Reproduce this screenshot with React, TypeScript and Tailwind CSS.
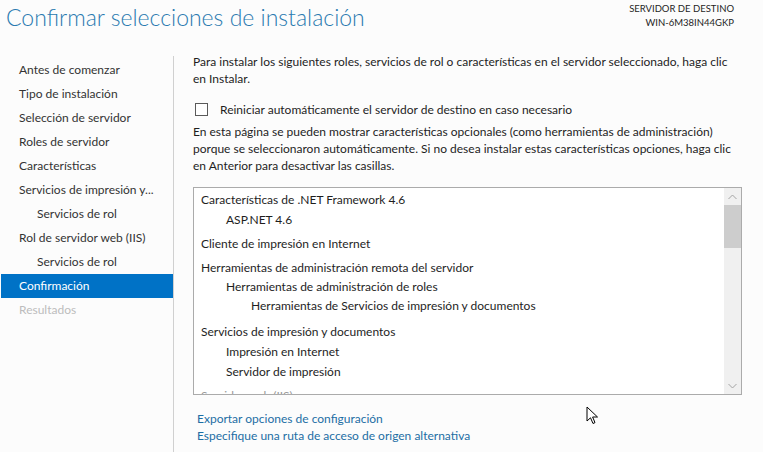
import React from 'react';

const navItems = [
  { label: 'Antes de comenzar', indent: false },
  { label: 'Tipo de instalación', indent: false },
  { label: 'Selección de servidor', indent: false },
  { label: 'Roles de servidor', indent: false },
  { label: 'Características', indent: false },
  { label: 'Servicios de impresión y...', indent: false },
  { label: 'Servicios de rol', indent: true },
  { label: 'Rol de servidor web (IIS)', indent: false },
  { label: 'Servicios de rol', indent: true },
  { label: 'Confirmación', indent: false, active: true },
  { label: 'Resultados', indent: false, disabled: true },
];

const groups = [
  {
    lead: 'leading-[20px]',
    gap: 'mb-[4px]',
    items: [
      { text: 'Características de .NET Framework 4.6', level: 0 },
      { text: 'ASP.NET 4.6', level: 1 },
    ],
  },
  {
    lead: 'leading-[20px]',
    gap: 'mb-[4px]',
    items: [{ text: 'Cliente de impresión en Internet', level: 0 }],
  },
  {
    lead: 'leading-[19px]',
    gap: 'mb-[7px]',
    items: [
      { text: 'Herramientas de administración remota del servidor', level: 0 },
      { text: 'Herramientas de administración de roles', level: 1 },
      { text: 'Herramientas de Servicios de impresión y documentos', level: 2 },
    ],
  },
  {
    lead: 'leading-[20px]',
    gap: 'mb-[4px]',
    items: [
      { text: 'Servicios de impresión y documentos', level: 0 },
      { text: 'Impresión en Internet', level: 1 },
      { text: 'Servidor de impresión', level: 1 },
    ],
  },
  {
    lead: 'leading-[20px]',
    gap: 'mb-[4px]',
    items: [{ text: 'Servidor web (IIS)', level: 0 }],
  },
];

const levelPad = ['pl-0', 'pl-[25px]', 'pl-[50px]'];

export default function App() {
  return (
    <div className="w-[763px] h-[452px] bg-[#fcfcfc] relative overflow-hidden text-[12px] text-[#1e1e1e] font-['Lato','Liberation_Sans',sans-serif]">
      {/* Header */}
      <div className="flex justify-between h-[53px]">
        <h1 className="pl-[6px] pt-[1px] text-[23px] leading-[32px] font-light text-[#2a7ab0]">
          Confirmar selecciones de instalación
        </h1>
        <div className="pr-[29px] pt-[2px] text-right text-[9.5px] leading-[14px] text-[#1e1e1e]">
          <div>SERVIDOR DE DESTINO</div>
          <div>WIN-6M38IN44GKP</div>
        </div>
      </div>

      <div className="flex">
        {/* Wizard steps */}
        <nav className="w-[174px] shrink-0 mt-[3px] h-[400px] border-r border-[#d0d0d0] pt-[2px] pl-[1px] pr-[1px]">
          {navItems.map((item, i) => (
            <div
              key={i}
              className={`w-[172px] h-[24px] flex items-center ${item.indent ? 'pl-[36px]' : 'pl-[18px]'} ${
                item.active ? 'bg-[#0072c6] text-white' : item.disabled ? 'text-[#bdbdbd]' : 'text-[#333333]'
              }`}
            >
              <span className="whitespace-nowrap">{item.label}</span>
            </div>
          ))}
        </nav>

        {/* Content */}
        <div className="flex-1 pl-[19px]">
          <p className="leading-[17px] w-[540px]">
            Para instalar los siguientes roles, servicios de rol o características en el servidor seleccionado, haga clic en Instalar.
          </p>

          <label className="mt-[14px] h-[17px] flex items-center">
            <span className="ml-[2px] w-[13px] h-[13px] border border-[#5a5a5a] bg-white" />
            <span className="ml-[12px]">Reiniciar automáticamente el servidor de destino en caso necesario</span>
          </label>

          <p className="mt-[5px] leading-[17px] w-[545px]">
            En esta página se pueden mostrar características opcionales (como herramientas de administración) porque se seleccionaron automáticamente. Si no desea instalar estas características opciones, haga clic en Anterior para desactivar las casillas.
          </p>

          {/* Feature list */}
          <div className="mt-[13px] w-[549px] h-[208px] border border-[#ababab] bg-white flex overflow-hidden">
            <div className="flex-1 pl-[7px] pt-[2px] overflow-hidden">
              {groups.map((g, gi) => (
                <div key={gi} className={g.gap}>
                  {g.items.map((it, ii) => (
                    <div key={ii} className={`${g.lead} ${levelPad[it.level]} ${gi === 4 ? 'text-[#9a9a9a]' : ''}`}>
                      {it.text}
                    </div>
                  ))}
                </div>
              ))}
            </div>
            <div className="w-[17px] bg-[#f0f0f0] flex flex-col">
              <div className="h-[17px] flex items-center justify-center">
                <svg width="9" height="6" viewBox="0 0 9 6" fill="none" stroke="#a3a3a3" strokeWidth="1">
                  <path d="M0.5 5 L4.5 1 L8.5 5" />
                </svg>
              </div>
              <div className="h-[43px] bg-[#cdcdcd]" />
              <div className="flex-1" />
              <div className="h-[17px] flex items-center justify-center">
                <svg width="9" height="6" viewBox="0 0 9 6" fill="none" stroke="#a3a3a3" strokeWidth="1">
                  <path d="M0.5 1 L4.5 5 L8.5 1" />
                </svg>
              </div>
            </div>
          </div>

          <div className="mt-[15px] ml-[4px] leading-[17px] text-[#1c6ea4]">
            <div>Exportar opciones de configuración</div>
            <div>Especifique una ruta de acceso de origen alternativa</div>
          </div>
        </div>
      </div>

      {/* Mouse pointer */}
      <svg className="absolute left-[586px] top-[406px]" width="14" height="20" viewBox="0 0 14 20">
        <path
          d="M1 1 L1 15 L4.5 11.8 L7 17.5 L9 16.6 L6.6 11 L11.5 11 Z"
          fill="#ffffff"
          stroke="#000000"
          strokeWidth="1"
          strokeLinejoin="miter"
        />
      </svg>
    </div>
  );
}
